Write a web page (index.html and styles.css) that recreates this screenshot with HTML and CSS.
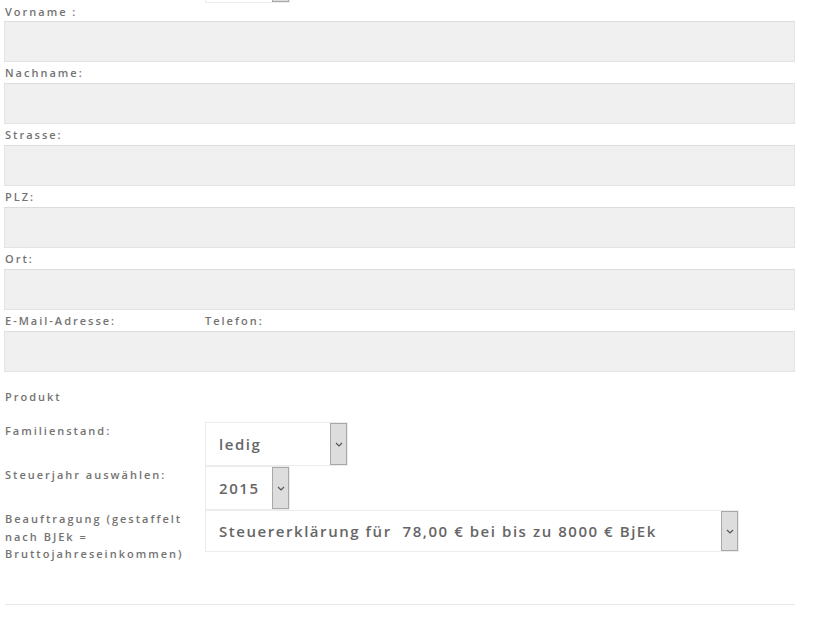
FILE: index.html
```html
<!DOCTYPE html>
<html lang="de">
<head>
    <meta charset="UTF-8">
    <meta name="viewport" content="width=device-width, initial-scale=1.0">
    <title>Steuererklärung Auftrag</title>
    <link rel="stylesheet" href="styles.css">
</head>
<body>
    <form class="order-form">
        <div class="select-row top-row">
            <div class="row-label"></div>
            <div class="select small">
                <span class="select-value"></span>
                <span class="select-arrow"></span>
            </div>
        </div>

        <div class="field-label first">Vorname :</div>
        <div class="text-input"></div>

        <div class="field-label">Nachname:</div>
        <div class="text-input"></div>

        <div class="field-label">Strasse:</div>
        <div class="text-input"></div>

        <div class="field-label">PLZ:</div>
        <div class="text-input"></div>

        <div class="field-label">Ort:</div>
        <div class="text-input"></div>

        <div class="field-label split">
            <span class="split-left">E-Mail-Adresse:</span>
            <span>Telefon:</span>
        </div>
        <div class="text-input"></div>

        <div class="section-title">Produkt</div>

        <div class="select-row">
            <div class="row-label">Familienstand:</div>
            <div class="select family">
                <span class="select-value">ledig</span>
                <span class="select-arrow"><svg width="8" height="5" viewBox="0 0 8 5"><path d="M1 1l3 3 3-3" fill="none" stroke="#555" stroke-width="1.2"/></svg></span>
            </div>
        </div>

        <div class="select-row">
            <div class="row-label">Steuerjahr auswählen:</div>
            <div class="select small">
                <span class="select-value">2015</span>
                <span class="select-arrow"><svg width="8" height="5" viewBox="0 0 8 5"><path d="M1 1l3 3 3-3" fill="none" stroke="#555" stroke-width="1.2"/></svg></span>
            </div>
        </div>

        <div class="select-row">
            <div class="row-label">Beauftragung (gestaffelt nach BJEk = Bruttojahreseinkommen)</div>
            <div class="select wide">
                <span class="select-value">Steuererklärung für&nbsp; 78,00 € bei bis zu 8000 € BjEk</span>
                <span class="select-arrow"><svg width="8" height="5" viewBox="0 0 8 5"><path d="M1 1l3 3 3-3" fill="none" stroke="#555" stroke-width="1.2"/></svg></span>
            </div>
        </div>

        <hr class="divider">
    </form>
</body>
</html>
```

FILE: styles.css
```css
body {
    margin: 0;
    background: #fff;
    font-family: "Open Sans", Arial, sans-serif;
    color: #6b6b6b;
    overflow: hidden;
}
.order-form {
    width: 791px;
    margin-left: 4px;
}
.field-label {
    height: 21px;
    line-height: 21px;
    padding-left: 1px;
    font-size: 11px;
    font-weight: 600;
    letter-spacing: 2px;
    color: #737373;
}
.field-label.first {
    height: 18px;
    line-height: 18px;
}
.field-label.split {
    display: flex;
}
.split-left {
    width: 200px;
}
.text-input {
    height: 39px;
    background: #f0f0f0;
    border: 1px solid #e3e3e3;
    border-top-color: #dcdcdc;
}
.section-title {
    margin-top: 14px;
    margin-bottom: 15px;
    height: 21px;
    line-height: 21px;
    padding-left: 1px;
    font-size: 11px;
    font-weight: 600;
    letter-spacing: 2px;
    color: #737373;
}
.select-row {
    display: flex;
    align-items: flex-start;
}
.top-row {
    margin-top: -41px;
}
.row-label {
    width: 200px;
    padding-left: 1px;
    font-size: 11px;
    font-weight: 600;
    letter-spacing: 2px;
    line-height: 17.5px;
    color: #737373;
}
.select {
    display: flex;
    justify-content: space-between;
    align-items: stretch;
    height: 42px;
    background: #fff;
    border: 1px solid #ececec;
}
.select.family {
    width: 141px;
}
.select.small {
    width: 83px;
}
.select.wide {
    width: 532px;
    height: 40px;
}
.select-value {
    padding-left: 13px;
    display: flex;
    align-items: center;
    font-size: 15px;
    font-weight: 600;
    letter-spacing: 1.55px;
    color: #666;
    white-space: nowrap;
}
.select-arrow {
    width: 15px;
    display: flex;
    align-items: center;
    justify-content: center;
    background: #dddddd;
    border: 1px solid #a8a8a8;
}
.divider {
    margin: 41px 0 0 1px;
    border: 0;
    border-top: 1px solid #e8e8e8;
}
```
